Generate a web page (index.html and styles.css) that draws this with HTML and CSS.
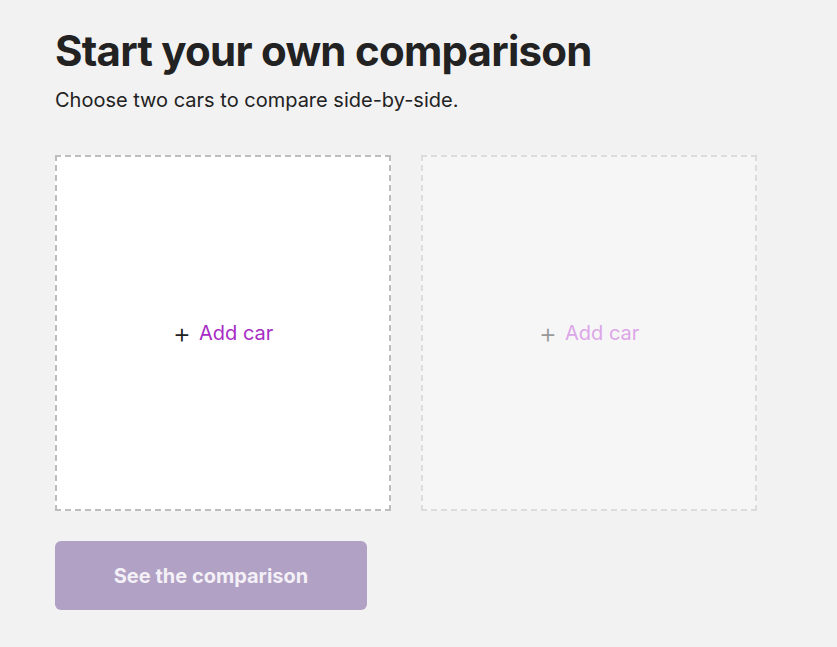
FILE: index.html
```html
<!DOCTYPE html>
<html lang="en">
<head>
<meta charset="utf-8">
<title>Start your own comparison</title>
<link rel="stylesheet" href="styles.css">
</head>
<body>
<main class="page">
  <h1 class="title">Start your own comparison</h1>
  <p class="subtitle">Choose two cars to compare side-by-side.</p>
  <div class="slots">
    <div class="slot slot-active">
      <span class="add"><span class="plus">+</span><span class="add-label">Add car</span></span>
    </div>
    <div class="slot slot-disabled">
      <span class="add"><span class="plus">+</span><span class="add-label">Add car</span></span>
    </div>
  </div>
  <button class="cta" disabled>See the comparison</button>
</main>
</body>
</html>
```

FILE: styles.css
```css
html, body {
  margin: 0;
  padding: 0;
  background: #f2f2f2;
}
body {
  font-family: Inter, "Noto Sans", sans-serif;
  color: #222;
}
.page {
  padding: 26px 0 0 55px;
}
.title {
  margin: 0;
  font-size: 42px;
  line-height: 50px;
  font-weight: 700;
  letter-spacing: -0.75px;
  color: #222;
}
.subtitle {
  margin: 12px 0 0;
  font-size: 20px;
  line-height: 24px;
  color: #222;
}
.slots {
  display: flex;
  gap: 30px;
  margin-top: 43px;
}
.slot {
  box-sizing: border-box;
  width: 336px;
  height: 356px;
  display: flex;
  align-items: center;
  justify-content: center;
}
.slot-active {
  background: #fff;
  border: 2px dashed #bdbdbd;
}
.slot-disabled {
  background: #f6f6f6;
  border: 2px dashed #dcdcdc;
}
.add {
  display: flex;
  align-items: center;
  gap: 8px;
  font-size: 20px;
  line-height: 24px;
}
.plus {
  font-size: 28px;
  font-weight: 300;
  color: #222;
}
.add-label {
  color: #a72cc5;
}
.slot-disabled .plus {
  color: #999;
}
.slot-disabled .add-label {
  color: #dca6e8;
}
.cta {
  display: block;
  margin-top: 30px;
  width: 312px;
  height: 69px;
  border: none;
  border-radius: 6px;
  background: #b1a1c4;
  color: #f4f0f7;
  font-family: Inter, "Noto Sans", sans-serif;
  font-size: 20px;
  font-weight: 700;
}
```
